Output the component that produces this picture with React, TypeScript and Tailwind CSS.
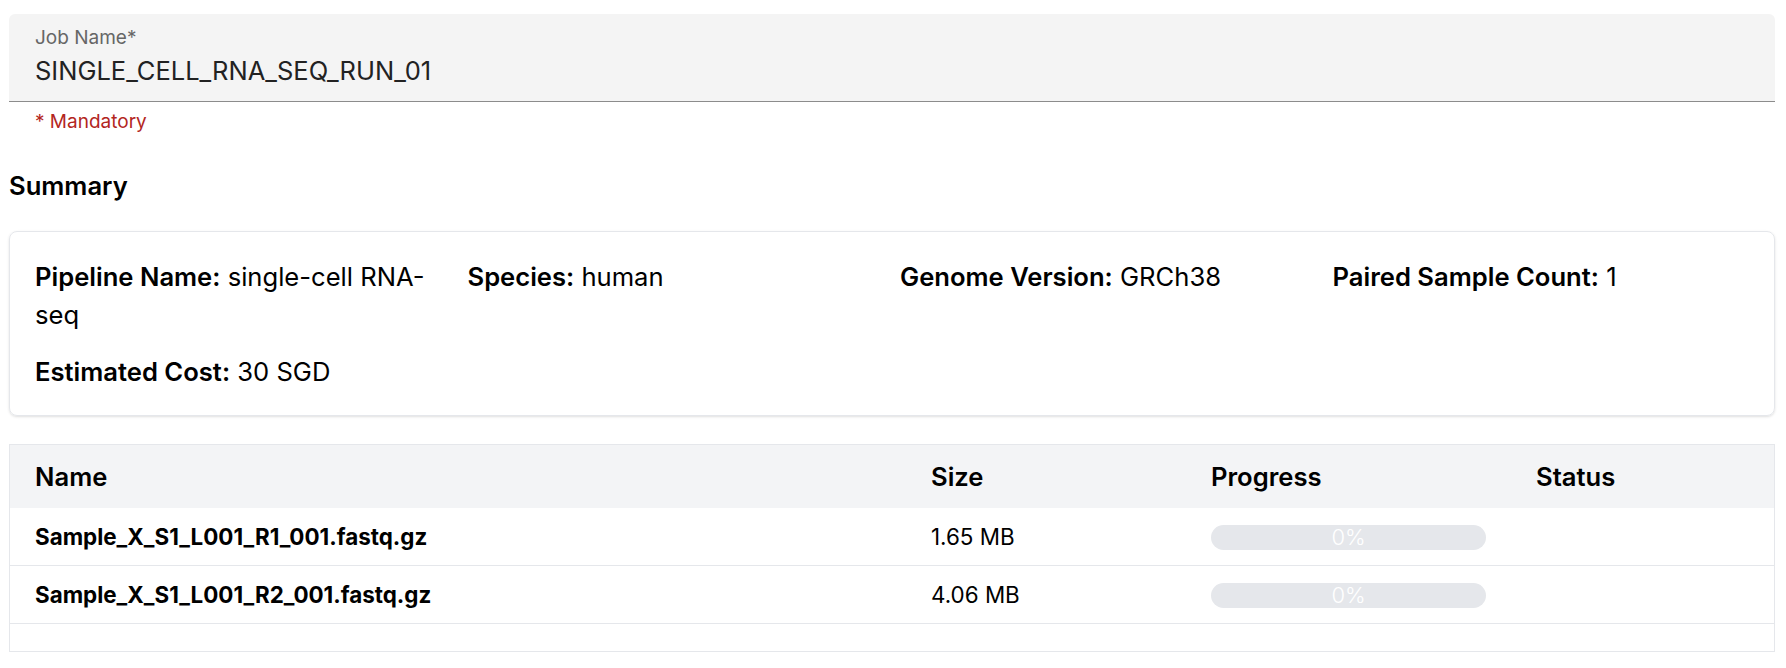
const summary = [
  { label: 'Pipeline Name:', value: 'single-cell RNA-seq' },
  { label: 'Species:', value: 'human' },
  { label: 'Genome Version:', value: 'GRCh38' },
  { label: 'Paired Sample Count:', value: '1' },
  { label: 'Estimated Cost:', value: '30 SGD' },
]

const files = [
  { name: 'Sample_X_S1_L001_R1_001.fastq.gz', size: '1.65 MB', progress: 0 },
  { name: 'Sample_X_S1_L001_R2_001.fastq.gz', size: '4.06 MB', progress: 0 },
]

export default function App() {
  return (
    <div className="min-h-screen bg-white pl-[9px] pr-[11px] pt-[14px] font-['Inter',sans-serif] text-black">
      {/* Job name field */}
      <div className="h-[88px] rounded-t-[6px] border-b border-[#8c8c8c] bg-[#f4f4f4] px-[26px] pt-[12px]">
        <div className="text-[19px] leading-[24px] text-[#666]">Job Name*</div>
        <div className="mt-[5px] text-[25.5px] leading-[32px] text-[#222]">SINGLE_CELL_RNA_SEQ_RUN_01</div>
      </div>
      <div className="mt-[8px] px-[26px] text-[19px] leading-[24px] text-[#b3261e]">* Mandatory</div>

      <h2 className="mt-[37px] text-[25.6px] font-semibold leading-[30px]">Summary</h2>

      {/* Summary card */}
      <div className="mt-[30px] grid grid-cols-4 gap-x-4 gap-y-[20px] rounded-[8px] border border-[#e5e7eb] px-[25px] pt-[26px] pb-[24px] text-[25.6px] leading-[37.6px] shadow-sm">
        {summary.map((s) => (
          <div key={s.label}>
            <span className="font-semibold">{s.label}</span> {s.value}
          </div>
        ))}
      </div>

      {/* Files table */}
      <div className="mt-[28px] border border-[#e5e7eb]">
        <div className="grid h-[63px] grid-cols-[896px_280px_325px_1fr] items-center bg-[#f3f4f6] pt-[2px] text-[25.6px] font-semibold">
          <div className="px-[25px]">Name</div>
          <div className="px-[25px]">Size</div>
          <div className="px-[25px]">Progress</div>
          <div className="px-[25px]">Status</div>
        </div>
        {files.map((f) => (
          <div
            key={f.name}
            className="grid h-[58px] grid-cols-[896px_280px_325px_1fr] items-center border-b border-[#e5e7eb] pt-[2px] text-[22.4px]"
          >
            <div className="px-[25px] font-bold">{f.name}</div>
            <div className="px-[25px]">{f.size}</div>
            <div className="px-[25px]">
              <div className="relative h-[25px] overflow-hidden rounded-full bg-[#e5e7eb]">
                <div className="h-full rounded-full bg-blue-500" style={{ width: `${f.progress}%` }} />
                <div className="absolute inset-0 text-center text-[22px] font-light leading-[25px] text-white">
                  {f.progress}%
                </div>
              </div>
            </div>
            <div className="px-[25px]"></div>
          </div>
        ))}
        <div className="h-[27px]" />
      </div>
    </div>
  )
}
